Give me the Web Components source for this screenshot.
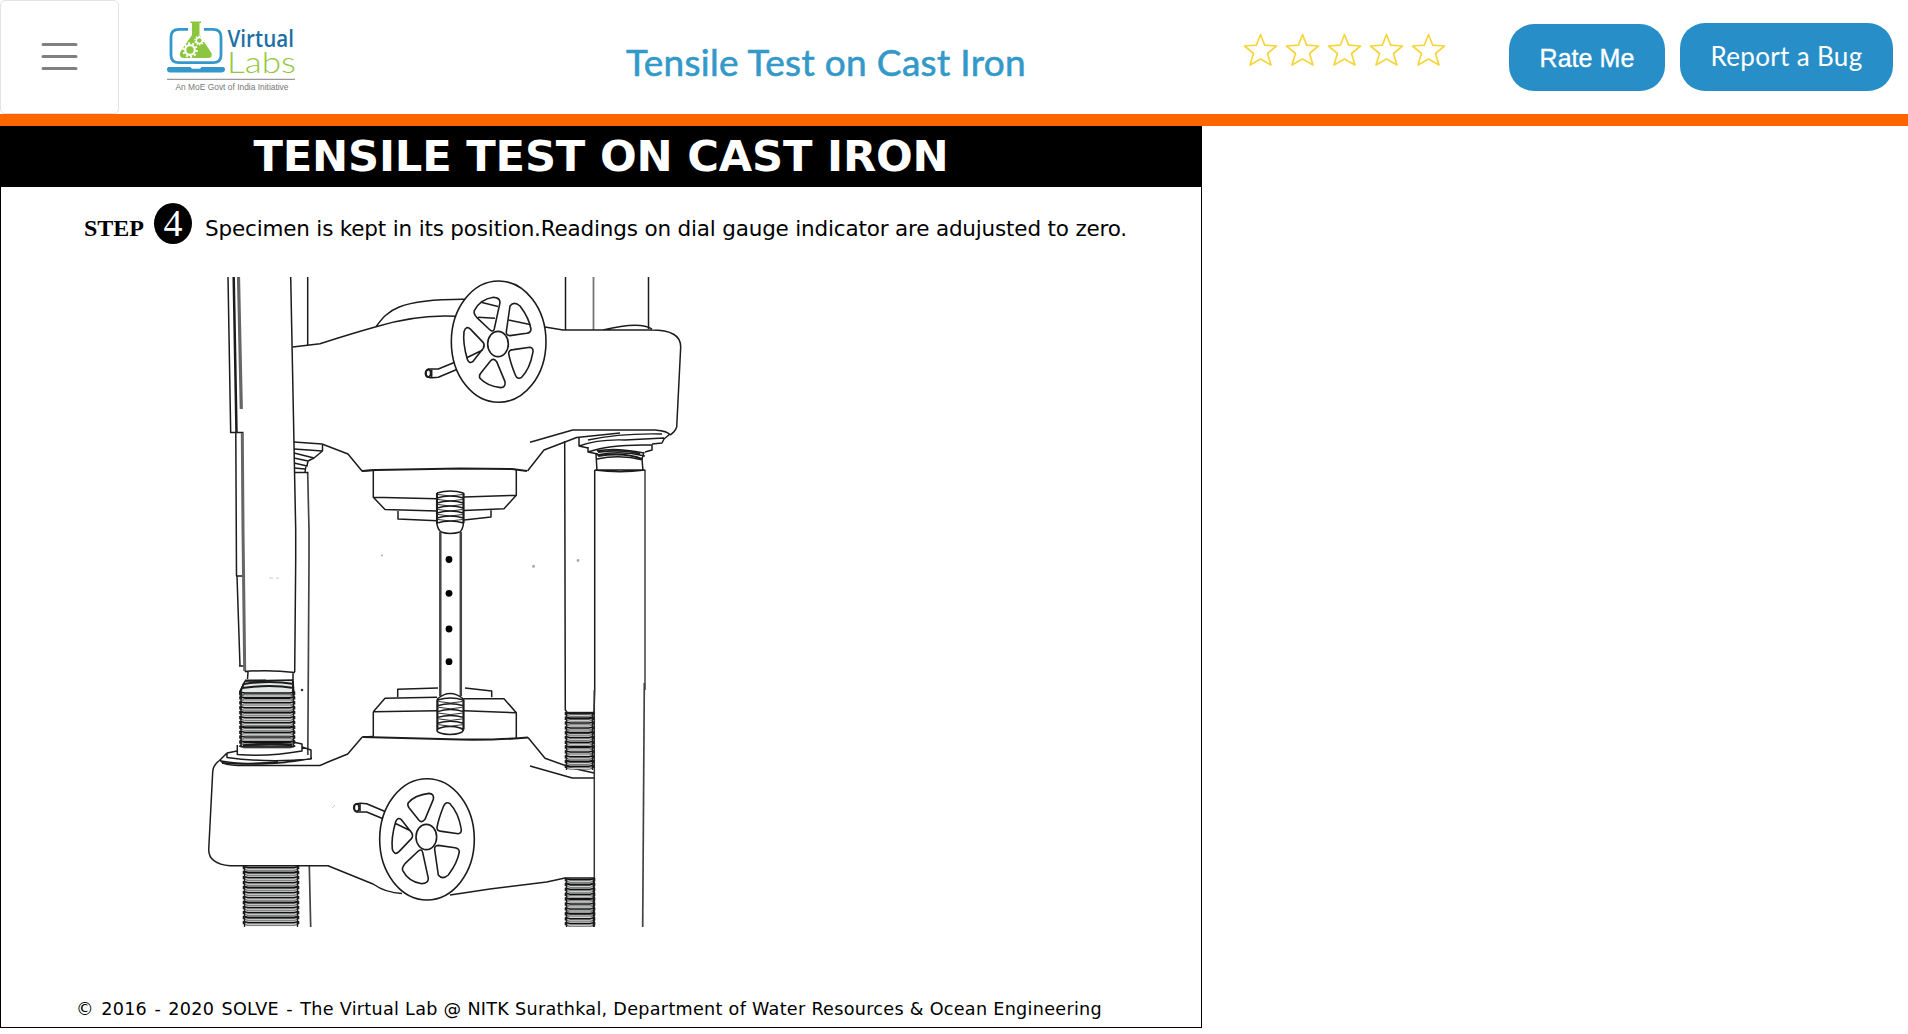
<!DOCTYPE html>
<html lang="en">
<head>
<meta charset="utf-8">
<title>Tensile Test on Cast Iron</title>
<style>
html,body{margin:0;padding:0;background:#fff;overflow:hidden}
</style>
</head>
<body>
<lab-page></lab-page>
<script>
const define = (name, html, setup) => customElements.define(name, class extends HTMLElement {
  connectedCallback() {
    if (this.shadowRoot) return;
    const root = this.attachShadow({mode: 'open'});
    root.innerHTML = html;
    if (setup) setup(this, root);
  }
});

/* Spreads its text over a given width with letter spacing. */
define('fit-text', `<style>:host{display:block;white-space:nowrap;flex:none}span{display:inline-block}</style><span><slot></slot></span>`,
  (host, root) => {
    const span = root.querySelector('span');
    const want = parseFloat(host.getAttribute('width'));
    const n = host.textContent.length;
    span.style.letterSpacing = '0px';
    span.style.letterSpacing = ((want - span.getBoundingClientRect().width) / n) + 'px';
    host.style.width = want + 'px';
  });

define('menu-toggle', `<style>
:host{display:flex;box-sizing:border-box;width:119px;height:114px;border:1px solid #e3e3e3;border-radius:5px;align-items:center;justify-content:center}
svg{display:block}</style>
<svg width="38" height="28" viewBox="0 0 38 28" stroke="#808080" stroke-width="3" stroke-linecap="round"><path d="M2 1.500H35M2 13.500H35M2 25.500H35"/></svg>`);

define('lab-logo', `<style>:host{display:block;width:130px;height:94px}svg{display:block}</style>
<svg width="150" height="94" viewBox="166 10 150 94">
<path d="M188 29.300H179Q171 29.300 171 37V55Q171 62.700 179 62.700H213Q221 62.700 221 55V37Q221 29.300 213 29.300H204" fill="none" stroke="#3498cc" stroke-width="2.800"/>
<path d="M169 67H190.500L192 68.800H200L201.500 67H223Q225 67 225 69.400T222 72.400H170Q167 72.400 167 69.400T169 67Z" fill="#3498cc"/>
<path d="M190.500 21.500H201V23H199.500V35L211.500 53Q213 58 208 58H184Q178.500 58 180.300 52L192 35V23H190.500Z" fill="#8cc63f"/>
<g fill="none" stroke="#fff"><circle cx="190" cy="50" r="4.800" stroke-width="2.200"/><circle cx="190" cy="50" r="6.800" stroke-width="2" stroke-dasharray="2 2.270"/><circle cx="199.300" cy="40.500" r="3" stroke-width="1.500"/><circle cx="199.300" cy="40.500" r="4.300" stroke-width="1.400" stroke-dasharray="1.400 1.300"/></g>
<text x="227.500" y="47" font-family="Open Sans" font-size="24" font-weight="600" fill="#1d6fa5" textLength="66.500" lengthAdjust="spacingAndGlyphs">Virtual</text>
<text x="227" y="72.500" font-family="Lato" font-weight="300" font-size="30" fill="#93c73f" textLength="69" lengthAdjust="spacingAndGlyphs">Labs</text>
<path d="M167 79.300H295" stroke="#999" stroke-width="1.200"/>
<text x="175.500" y="89.500" font-family="Liberation Sans" font-size="8.500" fill="#777" textLength="113" lengthAdjust="spacingAndGlyphs">An MoE Govt of India Initiative</text>
</svg>`);

define('star-rating', `<style>:host{display:flex;gap:7px}svg{display:block}</style>`, (h, root) => {
  for (let i = 0; i < 5; i++) root.innerHTML += `<svg width="35" height="34" viewBox="0 0 35 34" fill="#fff" stroke="#f7d53d" stroke-width="1.700" stroke-linejoin="round"><path d="M17.500 1.500L21.700 12.200L33.500 13L24.500 20.500L28 32L17.500 26L7 32L10.500 20.500L1.500 13L13.300 12.200Z"/></svg>`;
});

define('pill-button', `<style>:host{display:flex;box-sizing:border-box;background:#288ec8;color:#fff;border-radius:25px;align-items:center;justify-content:center;flex:none}</style><slot></slot>`);

define('lab-header', `<style>
:host{display:flex;height:114px;border-bottom:12px solid #f60;background:#fff;align-items:flex-start}
lab-logo{margin:10px 0 0 47px}
.title{margin:39px 0 0 330px;font:400 37px/46px Lato,sans-serif;color:#3399c9;-webkit-text-stroke:.6px #3399c9}
star-rating{margin:33px 0 0 217px}
.rate{width:156px;height:67px;margin:24px 0 0 63px;font:25px/30px "Liberation Sans",sans-serif;-webkit-text-stroke:.35px #fff}
.bug{width:213px;height:68px;margin:23px 0 0 15px;padding-bottom:2px;font:26px/30px Lato,sans-serif}
</style>
<menu-toggle></menu-toggle><lab-logo></lab-logo>
<fit-text class="title" width="400">Tensile Test on Cast Iron</fit-text>
<star-rating></star-rating>
<pill-button class="rate"><fit-text width="95">Rate Me</fit-text></pill-button>
<pill-button class="bug"><fit-text width="152">Report a Bug</fit-text></pill-button>`);

/* Thread of a screw between x1..x2, y1..y2: bold crests with thin grooves between. */
const thread = (x1, x2, y1, y2, pitch) => {
  let s = '';
  const a = x1, b = x2, i = 4;
  let k = 0;
  for (let y = y1 + 1; y < y2 - .5; y += pitch, k++) {
    const h = Math.min(pitch * .52, y2 - y);
    s += `<path d="M${a} ${y + h}L${a + i} ${y + h - .8}H${b - i}L${b} ${y + h}L${b - i} ${y + h + 1}H${a + i}Z" fill="#e4e8e6" stroke="#444" stroke-width=".700"/>`;
    s += `<path d="M${a - .8} ${y - .6}L${a + i} ${y + .5}H${b - i}L${b + .8} ${y - .6}" stroke-width="${k % 3 == 1 ? 2 : 1.500}" stroke="#111"/>`;
    s += `<path d="M${a} ${y - 1}V${Math.min(y + 2.2, y2)}M${b} ${y - 1}V${Math.min(y + 2.2, y2)}" stroke-width="2.600"/>`;
  }
  return s + `<path d="M${a + .5} ${y1}V${y2}M${b - .5} ${y1}V${y2}" stroke-width="1.300"/>`;
};
const coils = (x1, x2, y1, y2, n) => {
  let s = `<path d="M${x1} ${y1}V${y2}M${x2} ${y1}V${y2}" stroke-width="2"/>`;
  for (let k = 0; k < n; k++) {
    const y = y1 + (y2 - y1) * k / (n - 1);
    s += `<path d="M${x1} ${y}Q${(x1 + x2) / 2} ${y - 4} ${x2} ${y}"/>`;
    if (k < n - 1) s += `<path d="M${x1 + 1} ${y + 1.500}Q${(x1 + x2) / 2} ${y + 4.500} ${x2 - 1} ${y + 1.500}" stroke-width=".900"/>`;
  }
  return s;
};

define('testing-machine', `<style>:host{display:block;width:500px;height:650px}svg{display:block}</style>
<svg width="500" height="650" viewBox="200 277 500 650" fill="none" stroke="#1c1c1c" stroke-width="1.500" stroke-linejoin="round">
<defs><g id="wheel" stroke-width="4.800">
<path d="M78 275L25 297H-5Q-18 305 -12 318Q-5 326 25 322L82 298" fill="#fff"/><ellipse cx="-5" cy="310" rx="7" ry="11"/><path d="M5 299V321"/>
<ellipse cx="206" cy="215" rx="142" ry="182" fill="#fff"/><ellipse cx="204" cy="222" rx="31" ry="38"/>
<path d="M210 98Q210 82 190 82Q150 88 133 122Q130 130 140 142L180 180Q190 188 193 176Z"/>
<path d="M240 108Q252 92 270 108Q298 145 303 178Q302 188 290 190L240 197Q228 196 229 185Z"/>
<path d="M102 185Q108 165 122 178L160 218Q165 226 160 235L128 275Q118 282 112 268Q98 220 102 185ZM110 263L158 240"/>
<path d="M182 272Q190 263 200 275L225 335Q228 352 212 353Q170 348 150 325Q146 318 152 310Z"/>
<path d="M236 250Q236 240 250 239L300 232Q312 234 308 250Q300 295 275 322Q262 330 256 315Q240 275 236 250Z"/>
</g></defs>
<g class="columns">
<path d="M228 277L230.700 433M290.700 277L295.700 530V560L294.700 672M307.700 277V345"/>
<path d="M233.700 277L236.500 433" stroke-width="2.500"/>
<path d="M238.500 277L241.300 409" stroke="#666" stroke-width="3.200"/>
<path d="M230 432.500H243.500M235.800 433L236.500 576M237 576L240 666M236 576H243M239 666H245" />
<path d="M242.300 433L243 530L244.700 671" stroke="#666" stroke-width="3"/>
<path d="M307.700 473L309 530V560L307.800 755M309.300 866L310.700 927" stroke="#444" stroke-width="1.700"/>
<path d="M565.500 277V330M648.500 277V329M564.700 441L565.300 710L567 712M594.700 470V690L594 712"/>
<path d="M593.500 277V330" stroke="#777" stroke-width="1.800"/>
<path d="M594.300 690V927" stroke="#333"/>
<path d="M645 470V690" stroke="#555" stroke-width="1.700"/><path d="M644.300 683L642.700 927" stroke="#444" stroke-width="1.700"/>
</g>
<g class="upper-head">
<path d="M292.700 347L320 343.700Q350 334 376 326.700Q418 314 456 316.300M376 326.700C387 312 395 299 465 299.300"/>
<path d="M545 327L563 330H651.700Q681 330 680.700 347L676.700 427Q675 432 670 435M603 330Q640 321 652 329"/>
<path d="M530 442.300L572.700 430H655Q668 431 670 435M527.500 471L544 450L576.700 437.500L620 433"/>
<path d="M294 442L322 444L348 454L362 471L375 470"/>
<path d="M362 471L376 470L460 468.500L512 469L527 471" stroke-width="2.100"/>
<path d="M294 449L322.500 451V445M294 453L314 458L322.500 451M294 458L308 461L314 458M294 463L307 466L308 461M294 472.500H308.500M305 472L306 466M294 468L305 469"/>
<path d="M579 438V446L588 448M579 446Q598 439 625 440L664 438M588 440Q620 433 662 434M670 434L664 439L662 443L652 444M588 447V452L598 454M588 452Q610 444 652 445V450L645 452M597 451Q615 447 644 453M597 455Q620 450 645 456M597 459Q620 454 643 460M596 454L597 471M644 452L642 459L643 471M594.700 470H645.300M594.700 470Q620 473.500 645 470"/>
<path d="M598 452Q625 449 640 454M598 456Q625 452 642 459" stroke-width="2"/>
<path d="M373.300 470V497.300L385 509.500L437 511M373.300 497.300L437 498.700M398 510V519L437 520.700M516.300 470V495.300L504 508.700L464 510.500M516.300 495.300L464 497M491 510V517L464 520"/>
</g>
<g class="lower-head">
<path d="M373.300 711.700V737.500M373.300 711.700L385 698.300L437 697.300M373.300 711.700L437 710.700M397.700 697V689.300L438 688M464 698.700H504L516.300 712.700V738M464 710.700L516.300 712.700M465 688L491.700 691V697.300"/>
<path d="M320 765.500L328 762L347.700 754L362.300 737L373 736.500"/>
<path d="M363 737L460 739.500Q500 740 528 737.500" stroke-width="2.100"/>
<path d="M528 737.500L545 758.300L573 768.300L594 773M530 766L572.300 778H594M594 878H565L546.700 882L490 889L450 895"/>
<path d="M320 765.500H238Q222 765 220 760Q213 765 212.700 772L208.700 850Q209 864 230 865.700H328L373 884Q386 893 402 893.500"/>
<path d="M244.700 671.500Q270 669.500 295 672.500M248 672L247.500 679M293 673V680"/>
<g id="screws"></g>
<path d="M237.300 745V754.500Q268 757 302 751V744L293 742M227 753V757.500Q268 763 311 759V750L302 747M227 753L237 751M227 753L220 760M221 761Q260 768 312 758.500" fill="none"/>
<path d="M222 763Q245 765 278 762" stroke-width="2"/>
</g>
<g class="specimen">
<path d="M436.700 493V523Q438 530 441 532Q450 535 460 532Q463 529 463.500 523V493" fill="#fff"/>
<path d="M440.300 532V696M460.800 532V696" stroke-width="2.500" stroke="#444"/>
<path d="M437.300 699Q450 688 463.500 699V730H437.300Z" fill="#fff"/>
<g id="coils"></g>
<ellipse cx="450" cy="730.500" rx="13" ry="4" fill="#fff"/>
<g fill="#000" stroke="none"><circle cx="449" cy="559.500" r="3.400"/><circle cx="449" cy="593.300" r="3.400"/><circle cx="449" cy="629" r="3.400"/><circle cx="449" cy="661.700" r="3.400"/></g>
</g>
<use href="#wheel" transform="translate(430 270) scale(.3333)"/>
<path d="M482 302.500L498 306.500M478 317.300L495 318.300M508.500 320L530 324.500"/>
<use href="#wheel" transform="translate(358.330 911) scale(.3333 -.3333)"/>
<g fill="#aaa" stroke="none"><circle cx="533.500" cy="566.300" r="1.500"/><circle cx="578" cy="560.500" r="1.400"/><circle cx="382" cy="555.500" r="1"/><circle cx="302" cy="690" r="1.300" fill="#333"/></g>
<path d="M332 808L335 805M269 578H273M276 578H279" stroke="#ccc" stroke-width="1"/>
</svg>`, (h, root) => {
  root.getElementById('screws').innerHTML =
    '<path d="M245 681L240 691V695H294L293 680Z" fill="#e4e8e6"/><path d="M245 680.500H266M244 684Q270 680 294 684M242 688Q270 684 294 688M244 683L240 693M293 681V695" stroke-width="2"/>' +
    thread(240.500, 294, 691.500, 747, 4.9) + thread(244, 298, 866, 927, 5) +
    thread(566, 593, 712, 770, 4.8) + thread(566, 594, 878, 927, 4.900) +
    '<path d="M566 713H593.500" stroke-width="2.400"/><path d="M243 745.500Q268 743 292 745" stroke-width="2.600"/>';
  root.getElementById('coils').innerHTML = coils(437, 463.500, 493, 523, 7) + coils(437.500, 463.500, 700, 729, 6);
});

define('step-line', `<style>
:host{display:flex;align-items:baseline;height:74px;padding:16px 0 0 83px;color:#000}
.step{font:bold 24px/28px "Liberation Serif",serif}
.num{width:38px;height:41px;border-radius:50%;background:#000;color:#fff;font:38px/41px "Liberation Serif",serif;text-align:center;margin:0 13px 0 10px}
.text{font:21.500px/28px "DejaVu Sans",sans-serif}
</style>
<fit-text class="step" width="60">STEP</fit-text><div class="num">4</div>
<fit-text class="text" width="922">Specimen is kept in its position.Readings on dial gauge indicator are adujusted to zero.</fit-text>`);

define('lab-stage', `<style>
:host{display:flex;flex-direction:column;box-sizing:border-box;width:1202px;height:902px;border:1px solid #000;border-top:0}
h1{margin:0;height:61px;background:#000;color:#fff;display:flex;justify-content:center;font:bold 43.200px/61px "DejaVu Sans",sans-serif}
testing-machine{margin-left:199px}
.foot{margin:70px 0 0 75px;font:17.600px/24px "DejaVu Sans",sans-serif;color:#000}
.lead{word-spacing:1.400px}
</style>
<h1><fit-text width="695">TENSILE TEST ON CAST IRON</fit-text></h1>
<step-line></step-line><testing-machine></testing-machine>
<fit-text class="foot" width="1026"><span class="lead">© 2016 - 2020 SOLVE - </span>The Virtual Lab @ NITK Surathkal, Department of Water Resources &amp; Ocean Engineering</fit-text>`);

define('lab-page', `<style>:host{display:block;width:1908px;height:1034px;background:#fff}</style><lab-header></lab-header><lab-stage></lab-stage>`);
</script>
</body>
</html>
